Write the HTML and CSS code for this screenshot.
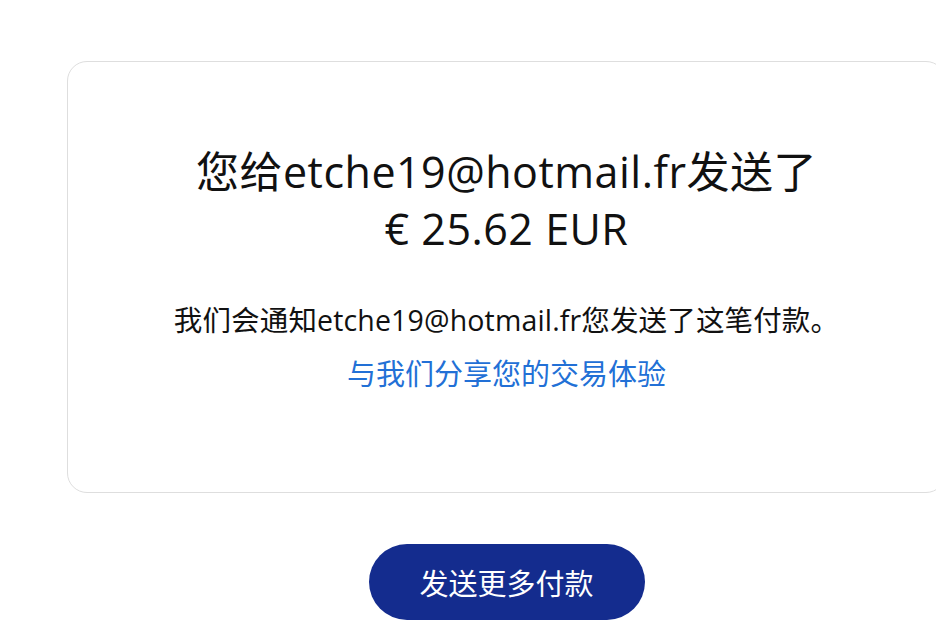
FILE: index.html
```html
<!DOCTYPE html>
<html lang="zh-CN">

<head>
  <meta charset="utf-8">
  <meta name="viewport" content="width=device-width, initial-scale=1">
  <title>付款已发送</title>
  <link rel="stylesheet" href="styles.css">
</head>

<body>
  <div id="mainContainer">
    <div class="receiptCard">
      <h1 class="receiptTitle">
        <span class="titleLine">您给etche19@hotmail.fr发送了</span>
        <span class="titleLine">€ 25.62 EUR</span>
      </h1>
      <p class="receiptNote">我们会通知etche19@hotmail.fr您发送了这笔付款。</p>
      <a class="feedbackLink" href="#">与我们分享您的交易体验</a>
    </div>

    <div class="actions">
      <button class="primaryButton" type="button">发送更多付款</button>
    </div>
  </div>
</body>

</html>
```

FILE: styles.css
```css
:root {
  --card-border: 1px solid #dedede;
  --text-color: #111;
  --link-color: #2270d6;
  --button-color: #142c8e;
}

* {
  padding: 0;
  margin: 0;
  box-sizing: border-box;
}

html,
body {
  height: 100%;
  width: 100%;
  overflow: hidden;
  background: #fff;
  color: var(--text-color);
  font-family: "Open Sans", "Noto Sans CJK SC", sans-serif;
}

#mainContainer {
  width: 879px;
  margin-left: 67px;
  padding-top: 61px;
}

.receiptCard {
  display: flex;
  flex-direction: column;
  align-items: center;
  height: 432px;
  padding-top: 81px;
  border: var(--card-border);
  border-radius: 20px;
  text-align: center;
}

.receiptTitle {
  display: flex;
  flex-direction: column;
  font-size: 43px;
  font-weight: 400;
  line-height: 57px;
  letter-spacing: 0.5px;
}

.receiptNote {
  margin-top: 43px;
  font-size: 28.5px;
  line-height: 40px;
  letter-spacing: 0.15px;
}

.feedbackLink {
  margin-top: 14px;
  font-size: 29px;
  line-height: 40px;
  color: var(--link-color);
  text-decoration: none;
}

.actions {
  display: flex;
  justify-content: center;
  margin-top: 51px;
}

.primaryButton {
  width: 276px;
  height: 76px;
  border: none;
  border-radius: 38px;
  background: var(--button-color);
  color: #fff;
  font-family: inherit;
  font-size: 29px;
  cursor: pointer;
}
```
